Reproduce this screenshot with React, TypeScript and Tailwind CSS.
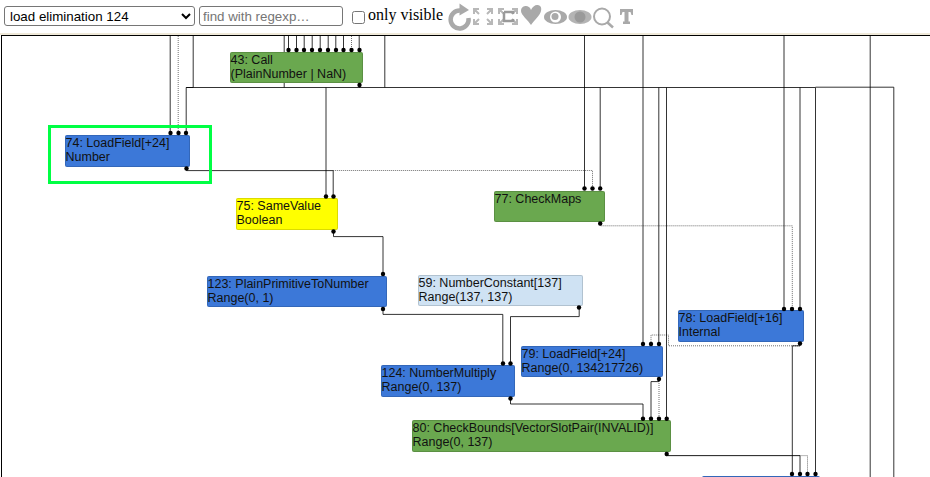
const OX = 2;
const OY = 36;

interface GraphNode {
  x: number;
  y: number;
  w: number;
  h: number;
  color: string;
  lines: string[];
}

const NODES: GraphNode[] = [
  { x: 230, y: 52, w: 133, h: 31, color: "#6aa84f", lines: ["43: Call", "(PlainNumber | NaN)"] },
  { x: 65, y: 135, w: 125, h: 32, color: "#3c78d8", lines: ["74: LoadField[+24]", "Number"] },
  { x: 236, y: 198, w: 102, h: 32, color: "#ffff00", lines: ["75: SameValue", "Boolean"] },
  { x: 494, y: 191, w: 111, h: 31, color: "#6aa84f", lines: ["77: CheckMaps"] },
  { x: 207, y: 276, w: 180, h: 31, color: "#3c78d8", lines: ["123: PlainPrimitiveToNumber", "Range(0, 1)"] },
  { x: 418, y: 275, w: 165, h: 31, color: "#cfe2f3", lines: ["59: NumberConstant[137]", "Range(137, 137)"] },
  { x: 381, y: 365, w: 134, h: 32, color: "#3c78d8", lines: ["124: NumberMultiply", "Range(0, 137)"] },
  { x: 521, y: 346, w: 142, h: 31, color: "#3c78d8", lines: ["79: LoadField[+24]", "Range(0, 134217726)"] },
  { x: 678, y: 310, w: 126, h: 32, color: "#3c78d8", lines: ["78: LoadField[+16]", "Internal"] },
  { x: 412, y: 420, w: 259, h: 32, color: "#6aa84f", lines: ["80: CheckBounds[VectorSlotPair(INVALID)]", "Range(0, 137)"] },
  { x: 702, y: 476, w: 118, h: 32, color: "#3c78d8", lines: [] },
];

const SOLID: string[] = [
  "170.2,36 170.2,132",
  "193.2,36 193.2,87.5 186.2,87.5 186.2,132",
  "284.2,36 284.2,87.5",
  "288.5,36 288.5,50",
  "296.5,36 296.5,50",
  "304.2,36 304.2,50",
  "312.2,36 312.2,50",
  "320.2,36 320.2,50",
  "328.2,36 328.2,50",
  "335.8,36 335.8,50",
  "343.5,36 343.5,50",
  "359.2,36 359.2,50",
  "359.5,85 359.5,87.5",
  "384.8,36 384.8,87.5",
  "186.2,87.5 815.5,87.5",
  "815.5,87.2 893.8,87.2 893.8,477",
  "326,87.5 326,196",
  "584.5,36 584.5,188",
  "600.2,87.5 600.2,188",
  "643,36 643,344",
  "658.8,87.5 658.8,344",
  "666.5,87.5 666.5,418",
  "784,36 784,309",
  "800,87.5 800,309",
  "815.5,87.5 815.5,474",
  "870.2,36 870.2,477",
  "186.5,168 186.5,170.6 333.2,170.6 333.2,196",
  "333.5,232 333.5,236.6 383,236.6 383,274",
  "383,309 383,314.4 502.8,314.4 502.8,363",
  "579.2,307 579.2,316.6 510.5,316.6 510.5,363",
  "510.5,398 510.5,404 643,404 643,418",
  "659,379 659,381.6 651,381.6 651,418",
  "800,343 800,345.8 792.3,345.8 792.3,474",
  "666.5,453 666.5,455.6 800,455.6 800,474",
];

const DOTTED: string[] = [
  "178.2,36 178.2,132",
  "351.5,36 351.5,50",
  "333.2,170.5 592.5,170.5 592.5,188",
  "600.2,223 600.2,225.8 792.3,225.8 792.3,309",
  "659,379 659,418",
  "800,345.8 668.5,345.8 668.5,335 651,335 651,344",
  "666.5,455.6 807.5,455.6 807.5,474",
];

const DOTS: [number, number][] = [
  [170.5, 133], [178.5, 133], [186, 133],
  [288.5, 50], [296.5, 50], [304, 50], [312, 50], [320, 50], [328, 50], [336, 50], [343.5, 50], [351.5, 50], [359.5, 50], [359.5, 85],
  [186.5, 168.5], [326, 196.5], [333.5, 196.5], [333.5, 231.5],
  [584.5, 188.5], [592.5, 188.5], [600.2, 188.5], [600.2, 223.5],
  [383, 274], [383, 309], [579, 307.5], [503, 363.5], [510.5, 363.5], [510.5, 398.5],
  [643, 344], [651, 344], [659, 344], [659, 379],
  [784, 309], [792, 309], [800, 309], [800, 343.5],
  [643, 418.7], [651, 418.7], [659, 418.7], [666.7, 418.7], [666.7, 454],
  [792, 474], [800, 474], [807.5, 474], [815.5, 474],
];

function Icon({ width, children }: { width: number; children: React.ReactNode }) {
  return (
    <svg width={width} height="33" viewBox={`0 0 ${width} 33`} className="shrink-0">
      {children}
    </svg>
  );
}

function ToolbarIcons() {
  const grey = "#a9a9a9";
  return (
    <div className="flex items-start">
      {/* refresh */}
      <Icon width={25}>
        <path d="M13 10.5 A9 9 0 1 0 21.5 18" fill="none" stroke={grey} strokeWidth="4.5" />
        <path d="M12.5 3.5 L22 10 L12.5 15.5 Z" fill={grey} />
      </Icon>
      {/* layout */}
      <Icon width={24}>
        <path
          d="M2 14 V9 H7 M2 9 L7 14 M15 9 H20 V14 M20 9 L15 14 M2 19 V24 H7 M2 24 L7 19 M15 24 H20 V19 M20 24 L15 19"
          fill="none"
          stroke="#b8b8b8"
          strokeWidth="2"
        />
      </Icon>
      <Icon width={24}>
        <path
          d="M3 14 V9 H8 M3 9 L8 14 M16 9 H21 V14 M21 9 L16 14 M3 19 V24 H8 M3 24 L8 19 M16 24 H21 V19 M21 24 L16 19"
          fill="none"
          stroke="#b8b8b8"
          strokeWidth="2"
        />
        <path d="M8 12 H17 V14 M8 12 V21 H17 V19" fill="none" stroke="#9a9a9a" strokeWidth="2.5" />
      </Icon>
      {/* heart */}
      <Icon width={23}>
        <path
          d="M11 25 C8 20 1 15 1 11 C1 7 4 6 6 6 C8 6 10 7 11 10 C12 7 15 5 17 5 C20 5 22 7 21 11 C20 16 14 20 11 25 Z"
          fill={grey}
        />
      </Icon>
      {/* eye open */}
      <Icon width={25}>
        <ellipse cx="12.5" cy="17" rx="11.5" ry="7" fill={grey} />
        <circle cx="12.5" cy="17" r="5.5" fill="#fff" />
        <circle cx="12" cy="16.5" r="3.5" fill={grey} />
      </Icon>
      {/* eye closed */}
      <Icon width={24}>
        <ellipse cx="12" cy="17" rx="11.5" ry="7" fill="#b4b4b4" />
        <circle cx="12" cy="17" r="5.5" fill="#9a9a9a" />
      </Icon>
      {/* search */}
      <Icon width={24}>
        <circle cx="10" cy="16.5" r="8" fill="none" stroke={grey} strokeWidth="2" />
        <path d="M15.5 22.5 L21 27.5" stroke={grey} strokeWidth="2.5" />
      </Icon>
      {/* text */}
      <Icon width={20}>
        <path d="M4 9 H17 V15 H15.5 L14.5 12 H12.5 V21.5 H14 V24 H7 V21.5 H8.5 V12 H6.5 L5.5 15 H4 Z" fill={grey} />
      </Icon>
    </div>
  );
}

export default function App() {
  return (
    <div className="relative w-[930px] h-[477px] overflow-hidden bg-white font-['Liberation_Sans',sans-serif]">
      <div className="flex items-start h-[33px] pl-1">
        <select className="w-[191px] h-[20px] mt-[6px] border border-[#767676] rounded-[3px] bg-white text-[13.33px] text-black pl-[1px]">
          <option>load elimination 124</option>
        </select>
        <input
          type="text"
          placeholder="find with regexp…"
          className="w-[144px] h-[20px] mt-[6px] ml-[4px] border border-[#767676] rounded-[3px] bg-white text-[13.33px] px-[3px] placeholder:text-[#757575]"
        />
        <input type="checkbox" className="w-[13px] h-[13px] ml-[9px] mt-[11px] appearance-auto" />
        <span className="w-[79px] ml-[3px] mt-[5px] font-['Liberation_Serif',serif] text-[16px] leading-[20px] text-black">
          only visible
        </span>
        <ToolbarIcons />
      </div>
      <div className="h-[2px] bg-[#efe9d9]" />
      <div className="relative ml-[1px] h-[442px] border-t border-l border-black overflow-hidden">
        <svg
          width="928"
          height="441"
          viewBox={`${OX} ${OY} 928 441`}
          className="absolute left-0 top-0"
        >
          <g fill="none" stroke="#000" strokeWidth="0.8">
            {SOLID.map((points, i) => (
              <polyline key={i} points={points} />
            ))}
          </g>
          <g fill="none" stroke="#000" strokeWidth="0.8" strokeDasharray="1 1" opacity="0.7">
            {DOTTED.map((points, i) => (
              <polyline key={i} points={points} />
            ))}
          </g>
        </svg>
        {NODES.map((node, i) => (
          <div
            key={i}
            className="absolute rounded-[2px] shadow-[inset_0_0_0_1px_#00000024] pt-px pl-[0.5px] text-[12.5px] leading-[14px] text-[#111] whitespace-nowrap"
            style={{
              left: node.x - OX,
              top: node.y - OY,
              width: node.w,
              height: node.h,
              backgroundColor: node.color,
            }}
          >
            {node.lines.map((line) => (
              <div key={line}>{line}</div>
            ))}
          </div>
        ))}
        <svg
          width="928"
          height="441"
          viewBox={`${OX} ${OY} 928 441`}
          className="absolute left-0 top-0 pointer-events-none"
        >
          {DOTS.map(([x, y], i) => (
            <circle key={i} cx={x} cy={y} r="2.2" fill="#000" />
          ))}
        </svg>
        {/* selected node highlight */}
        <div className="absolute left-[46px] top-[89px] w-[164px] h-[59px] border-[3px] border-[#00ff44]" />
      </div>
    </div>
  );
}
